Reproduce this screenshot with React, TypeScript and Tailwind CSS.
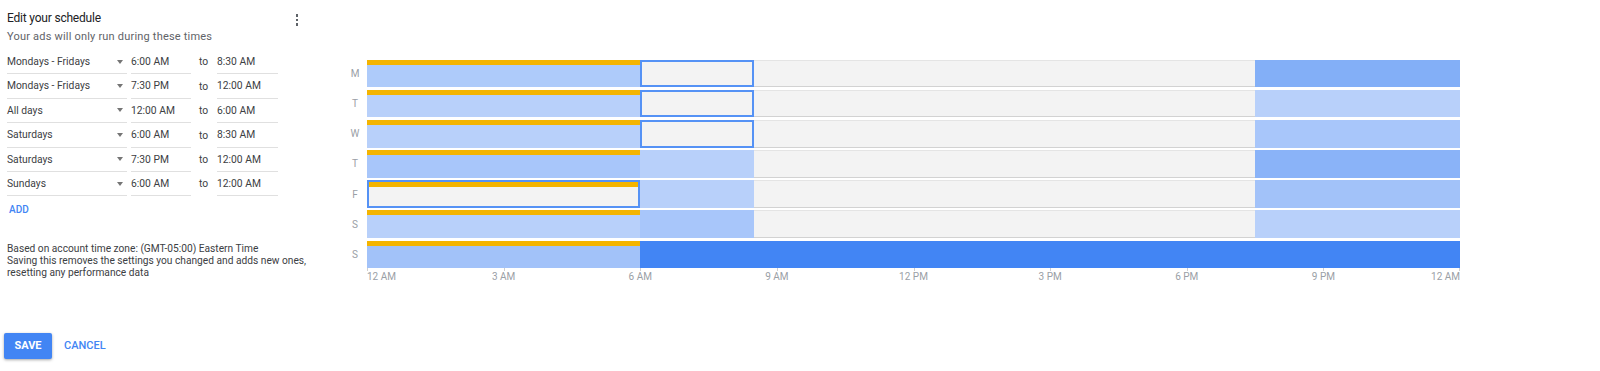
import React from "react";

type Seg = { from: number; to: number; color?: string; outline?: boolean };

const DAY_ROWS: { label: string; segs: Seg[] }[] = [
  {
    label: "M",
    segs: [
      { from: 0, to: 6, color: "#aecbfa" },
      { from: 6, to: 8.5, outline: true },
      { from: 19.5, to: 24, color: "#83aff7" },
    ],
  },
  {
    label: "T",
    segs: [
      { from: 0, to: 6, color: "#b8d0fa" },
      { from: 6, to: 8.5, outline: true },
      { from: 19.5, to: 24, color: "#b8d0fa" },
    ],
  },
  {
    label: "W",
    segs: [
      { from: 0, to: 6, color: "#b8d0fa" },
      { from: 6, to: 8.5, outline: true },
      { from: 19.5, to: 24, color: "#a8c6fa" },
    ],
  },
  {
    label: "T",
    segs: [
      { from: 0, to: 6, color: "#a8c6fa" },
      { from: 6, to: 8.5, color: "#b8d0fa" },
      { from: 19.5, to: 24, color: "#8ab3f8" },
    ],
  },
  {
    label: "F",
    segs: [
      { from: 0, to: 6, outline: true },
      { from: 6, to: 8.5, color: "#b8d0fa" },
      { from: 19.5, to: 24, color: "#a2c2f9" },
    ],
  },
  {
    label: "S",
    segs: [
      { from: 0, to: 6, color: "#b8d0fa" },
      { from: 6, to: 8.5, color: "#a8c6fa" },
      { from: 19.5, to: 24, color: "#b8d0fa" },
    ],
  },
  {
    label: "S",
    segs: [
      { from: 0, to: 6, color: "#a2c2f9" },
      { from: 6, to: 24, color: "#4285f4" },
    ],
  },
];

const SCHEDULE = [
  ["Mondays - Fridays", "6:00 AM", "8:30 AM"],
  ["Mondays - Fridays", "7:30 PM", "12:00 AM"],
  ["All days", "12:00 AM", "6:00 AM"],
  ["Saturdays", "6:00 AM", "8:30 AM"],
  ["Saturdays", "7:30 PM", "12:00 AM"],
  ["Sundays", "6:00 AM", "12:00 AM"],
];

const AXIS = ["12 AM", "3 AM", "6 AM", "9 AM", "12 PM", "3 PM", "6 PM", "9 PM", "12 AM"];

const pct = (h: number) => `${(h / 24) * 100}%`;

function ScheduleRow({ day, start, end }: { day: string; start: string; end: string }) {
  return (
    <div className="flex items-stretch h-[24.4px] text-[10.3px] text-[#3c4043]">
      <div className="w-[120px] flex items-center justify-between border-b border-[#e0e0e0] pr-[4px]">
        <span>{day}</span>
        <span className="w-0 h-0 border-l-[3.5px] border-r-[3.5px] border-t-[4px] border-l-transparent border-r-transparent border-t-[#757575]" />
      </div>
      <div className="w-[60px] ml-[4px] flex items-center border-b border-[#e0e0e0]">{start}</div>
      <div className="w-[26px] flex items-center pl-[8px]">to</div>
      <div className="w-[61px] flex items-center border-b border-[#e0e0e0]">{end}</div>
    </div>
  );
}

function DayRow({ label, segs }: { label: string; segs: Seg[] }) {
  return (
    <div className="flex items-center h-[27.7px]">
      <div className="w-[24px] text-center text-[10px] text-[#9aa0a6]">{label}</div>
      <div className="relative w-[1093px] h-full bg-[#f3f3f3] border-y border-t-[#e4e4e4] border-b-[#d2d2d2]">
        {segs.map((s, i) => (
          <div
            key={i}
            className={
              "absolute -top-px -bottom-px " +
              (s.outline ? "border-2 border-[#5592f5] bg-[#f3f3f3]" : "")
            }
            style={{ left: pct(s.from), width: pct(s.to - s.from), background: s.color }}
          >
            {s.from === 0 && <div className="absolute left-0 right-0 top-0 h-[5px] bg-[#f4b400]" />}
          </div>
        ))}
      </div>
    </div>
  );
}

export default function App() {
  return (
    <div className="w-[1600px] h-[371px] bg-white flex font-['Roboto',sans-serif] overflow-hidden">
      {/* left editor */}
      <div className="w-[343px] pl-[7px] pt-[10px] flex flex-col">
        <div className="flex items-start justify-between w-[290px]">
          <h1 className="text-[12px] leading-[17px] tracking-[-0.2px] text-[#202124]">Edit your schedule</h1>
          <div className="flex flex-col gap-[2px] pt-[4px] mr-[-1px]">
            <span className="w-[2.5px] h-[2.5px] bg-[#5f6368]" />
            <span className="w-[2.5px] h-[2.5px] bg-[#5f6368]" />
            <span className="w-[2.5px] h-[2.5px] bg-[#5f6368]" />
          </div>
        </div>
        <p className="text-[11px] leading-[13px] tracking-[0.2px] text-[#5f6368] mt-[3px]">
          Your ads will only run during these times
        </p>
        <div className="mt-[7px] flex flex-col">
          {SCHEDULE.map(([d, s, e], i) => (
            <ScheduleRow key={i} day={d} start={s} end={e} />
          ))}
        </div>
        <button className="self-start mt-[6px] ml-[2px] text-[10px] font-medium text-[#4285f4]">ADD</button>
        <div className="mt-[26px] text-[10.2px] leading-[12px] text-[#3c4043]">
          <p>Based on account time zone: (GMT-05:00) Eastern Time</p>
          <p>Saving this removes the settings you changed and adds new ones,</p>
          <p>resetting any performance data</p>
        </div>
        <div className="flex items-center mt-[54px] ml-[-3px] gap-[12px]">
          <button className="w-[48px] h-[26px] bg-[#4285f4] text-white text-[11px] font-bold rounded-[2px] shadow-[0_1px_3px_rgba(0,0,0,0.35)]">
            SAVE
          </button>
          <button className="text-[11px] font-medium text-[#4285f4]">CANCEL</button>
        </div>
      </div>

      {/* weekly chart */}
      <div className="pt-[59.5px] flex flex-col">
        <div className="flex flex-col gap-[2.5px]">
          {DAY_ROWS.map((r, i) => (
            <DayRow key={i} label={r.label} segs={r.segs} />
          ))}
        </div>
        <div className="ml-[24px] relative w-[1093px] h-[20px]">
          {AXIS.map((t, i) => (
            <div key={i} className="absolute top-0" style={{ left: pct(i * 3) }}>
              <div className={"w-px h-[3px] bg-[#cfcfcf] " + (i === 8 ? "-ml-px" : "")} />
              <span
                className={
                  "absolute top-[3px] text-[10px] leading-[12px] text-[#9aa0a6] whitespace-nowrap " +
                  (i === 0 ? "left-0" : i === 8 ? "right-0" : "-translate-x-1/2")
                }
              >
                {t}
              </span>
            </div>
          ))}
        </div>
      </div>
    </div>
  );
}
